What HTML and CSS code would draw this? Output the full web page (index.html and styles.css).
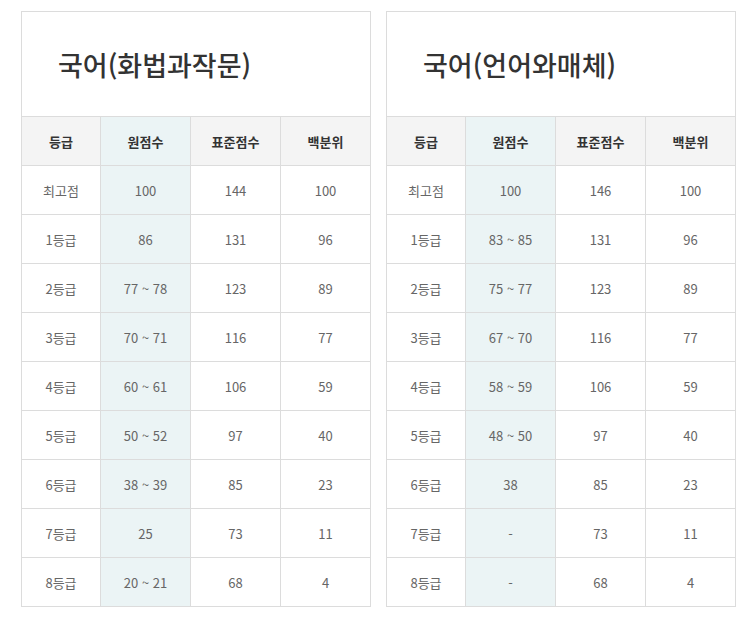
FILE: index.html
```html
<!DOCTYPE html>
<html lang="ko">
<head>
<meta charset="utf-8">
<link rel="stylesheet" href="styles.css">
</head>
<body>
<div class="wrap">
  <section class="panel">
    <h2 class="title">국어(화법과작문)</h2>
    <table class="grade">
      <thead>
        <tr><th class="c1">등급</th><th class="raw">원점수</th><th>표준점수</th><th>백분위</th></tr>
      </thead>
      <tbody>
        <tr><td>최고점</td><td class="raw">100</td><td>144</td><td>100</td></tr>
        <tr><td>1등급</td><td class="raw">86</td><td>131</td><td>96</td></tr>
        <tr><td>2등급</td><td class="raw">77 ~ 78</td><td>123</td><td>89</td></tr>
        <tr><td>3등급</td><td class="raw">70 ~ 71</td><td>116</td><td>77</td></tr>
        <tr><td>4등급</td><td class="raw">60 ~ 61</td><td>106</td><td>59</td></tr>
        <tr><td>5등급</td><td class="raw">50 ~ 52</td><td>97</td><td>40</td></tr>
        <tr><td>6등급</td><td class="raw">38 ~ 39</td><td>85</td><td>23</td></tr>
        <tr><td>7등급</td><td class="raw">25</td><td>73</td><td>11</td></tr>
        <tr><td>8등급</td><td class="raw">20 ~ 21</td><td>68</td><td>4</td></tr>
      </tbody>
    </table>
  </section>
  <section class="panel">
    <h2 class="title">국어(언어와매체)</h2>
    <table class="grade">
      <thead>
        <tr><th class="c1">등급</th><th class="raw">원점수</th><th>표준점수</th><th>백분위</th></tr>
      </thead>
      <tbody>
        <tr><td>최고점</td><td class="raw">100</td><td>146</td><td>100</td></tr>
        <tr><td>1등급</td><td class="raw">83 ~ 85</td><td>131</td><td>96</td></tr>
        <tr><td>2등급</td><td class="raw">75 ~ 77</td><td>123</td><td>89</td></tr>
        <tr><td>3등급</td><td class="raw">67 ~ 70</td><td>116</td><td>77</td></tr>
        <tr><td>4등급</td><td class="raw">58 ~ 59</td><td>106</td><td>59</td></tr>
        <tr><td>5등급</td><td class="raw">48 ~ 50</td><td>97</td><td>40</td></tr>
        <tr><td>6등급</td><td class="raw">38</td><td>85</td><td>23</td></tr>
        <tr><td>7등급</td><td class="raw">-</td><td>73</td><td>11</td></tr>
        <tr><td>8등급</td><td class="raw">-</td><td>68</td><td>4</td></tr>
      </tbody>
    </table>
  </section>
</div>
</body>
</html>
```

FILE: styles.css
```css
html, body {
  margin: 0;
  padding: 0;
  background: #fff;
}
body {
  font-family: "Noto Sans CJK KR", "Noto Sans", sans-serif;
  color: #666;
}
.wrap {
  display: flex;
  gap: 15px;
  padding: 11px 0 0 21px;
}
.panel {
  width: 350px;
}
.title {
  margin: 0;
  height: 104px;
  border: 1px solid #dcdcdc;
  border-bottom: none;
  display: flex;
  align-items: center;
  padding-left: 36px;
  font-size: 27px;
  font-weight: 500;
  color: #333;
}
.grade {
  width: 350px;
  border-collapse: collapse;
  table-layout: fixed;
}
.grade th, .grade td {
  border: 1px solid #dcdcdc;
  height: 49px;
  padding: 0;
  text-align: center;
  font-size: 13px;
  box-sizing: border-box;
}
.grade th {
  background: #f4f4f4;
  color: #333;
  font-weight: 700;
}
.grade .c1 {
  width: 79px;
}
.grade th.raw, .grade td.raw {
  background: #ebf4f5;
}
```
